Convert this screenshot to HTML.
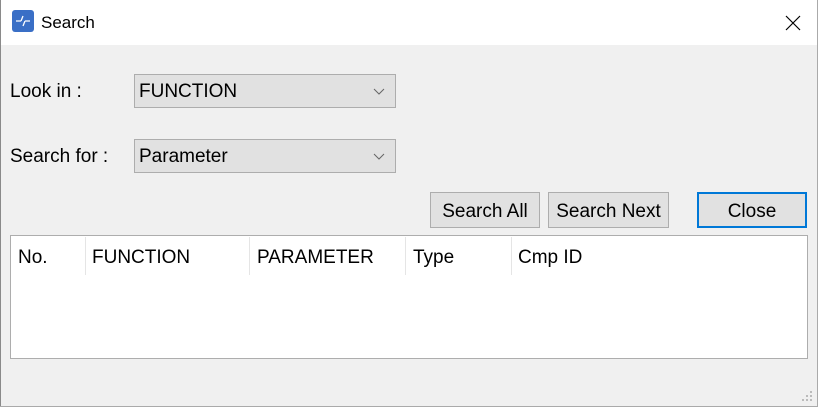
<!DOCTYPE html>
<html><head><style>
*{margin:0;padding:0;box-sizing:border-box}
body{width:818px;height:407px;background:#f0f0f0;font-family:"Liberation Sans",sans-serif;font-size:19px;color:#000;position:relative;overflow:hidden}
.a{position:absolute}
.title{left:0;top:0;width:818px;height:45px;background:#fff}
.combo{background:#e1e1e1;border:1px solid #adadad;height:34px;width:262px;left:134px;padding:6px 0 0 4px}
.combo svg{position:absolute;right:10px;top:13px}
.btn{background:#e1e1e1;border:1px solid #adadad;height:36px;top:192px;text-align:center;padding-top:8px;white-space:nowrap}
.hdr{top:247px}
.sep{top:237px;width:1px;height:38px;background:#e5e5e5}
</style></head><body>
<div class="a title"></div>
<div class="a" style="left:0;top:0;width:1px;height:407px;background:#8a8a8a"></div>
<div class="a" style="left:817px;top:0;width:1px;height:407px;background:#aaa"></div>
<div class="a" style="left:0;top:406px;width:818px;height:1px;background:#aaa"></div>
<svg class="a" style="left:12px;top:10px" width="22" height="22"><rect width="22" height="22" rx="3" fill="#3a6fc6"/><path d="M4 11h5M13 11h5M9 11l2-5M11 16l2-5" stroke="#fff" stroke-width="1.3" fill="none"/></svg>
<div class="a" style="left:41px;top:13px;font-size:17px">Search</div>
<svg class="a" style="left:785px;top:15px" width="16" height="16"><path d="M1 1L15 15M15 1L1 15" stroke="#000" stroke-width="1.2"/></svg>
<div class="a" style="left:10px;top:81px">Look in :</div>
<div class="a combo" style="top:74px">FUNCTION<svg width="12" height="7"><path d="M1 1l5 5 5-5" stroke="#666" fill="none"/></svg></div>
<div class="a" style="left:10px;top:146px">Search for :</div>
<div class="a combo" style="top:139px">Parameter<svg width="12" height="7"><path d="M1 1l5 5 5-5" stroke="#666" fill="none"/></svg></div>
<div class="a btn" style="left:430px;width:110px">Search All</div>
<div class="a btn" style="left:548px;width:121px">Search Next</div>
<div class="a btn" style="left:697px;width:110px;border:2px solid #0078d7;padding-top:7px">Close</div>
<div class="a" style="left:10px;top:235px;width:798px;height:124px;background:#fff;border:1px solid #adadad"></div>
<div class="a hdr" style="left:18px">No.</div>
<div class="a hdr" style="left:92px">FUNCTION</div>
<div class="a hdr" style="left:257px">PARAMETER</div>
<div class="a hdr" style="left:413px">Type</div>
<div class="a hdr" style="left:518px">Cmp ID</div>
<div class="a sep" style="left:85px"></div>
<div class="a sep" style="left:249px"></div>
<div class="a sep" style="left:405px"></div>
<div class="a sep" style="left:511px"></div>
<svg class="a" style="left:802px;top:391px" width="12" height="12" fill="#bbb"><rect x="8" y="0" width="2" height="2"/><rect x="4" y="4" width="2" height="2"/><rect x="8" y="4" width="2" height="2"/><rect x="0" y="8" width="2" height="2"/><rect x="4" y="8" width="2" height="2"/><rect x="8" y="8" width="2" height="2"/></svg>
</body></html>
